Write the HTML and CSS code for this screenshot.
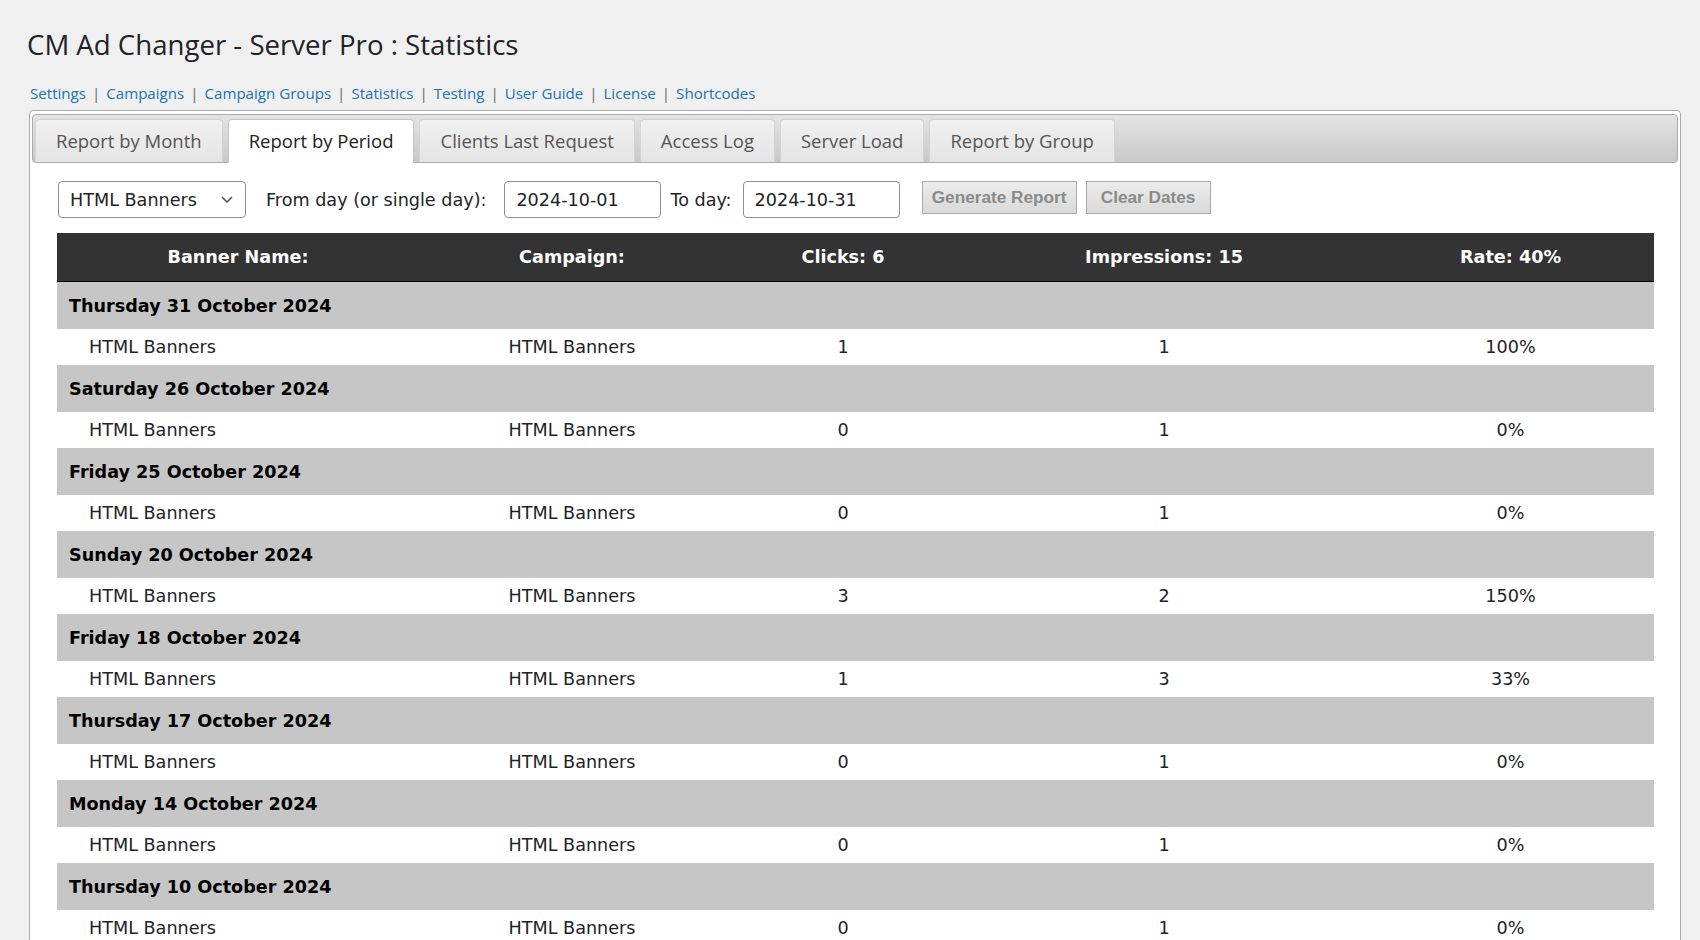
FILE: index.html
```html
<!DOCTYPE html>
<html>
<head>
<meta charset="utf-8">
<title>CM Ad Changer - Statistics</title>
<link rel="stylesheet" href="styles.css">
</head>
<body>
<div class="wrap">
  <h1 class="title">CM Ad Changer - Server Pro : Statistics</h1>
  <div class="subnav">
    <a href="#">Settings</a><span class="sep">|</span><a href="#">Campaigns</a><span class="sep">|</span><a href="#">Campaign Groups</a><span class="sep">|</span><a href="#">Statistics</a><span class="sep">|</span><a href="#">Testing</a><span class="sep">|</span><a href="#">User Guide</a><span class="sep">|</span><a href="#">License</a><span class="sep">|</span><a href="#">Shortcodes</a>
  </div>
  <div class="panel">
    <ul class="tabs">
      <li class="tab">Report by Month</li>
      <li class="tab active">Report by Period</li>
      <li class="tab">Clients Last Request</li>
      <li class="tab">Access Log</li>
      <li class="tab">Server Load</li>
      <li class="tab">Report by Group</li>
    </ul>
    <div class="content">
      <div class="controls">
        <div class="select"><span>HTML Banners</span><svg class="chev" width="12" height="7" viewBox="0 0 12 7"><path d="M1 1 L6 6 L11 1" fill="none" stroke="#50575e" stroke-width="1.6"/></svg></div>
        <span class="lbl from">From day (or single day):</span>
        <div class="input">2024-10-01</div>
        <span class="lbl to">To day:</span>
        <div class="input">2024-10-31</div>
        <button class="btn gen">Generate Report</button>
        <button class="btn clr">Clear Dates</button>
      </div>
      <table class="stats">
        <colgroup>
          <col class="c1"><col class="c2"><col class="c3"><col class="c4"><col class="c5">
        </colgroup>
        <thead>
          <tr><th>Banner Name:</th><th>Campaign:</th><th>Clicks: 6</th><th>Impressions: 15</th><th>Rate: 40%</th></tr>
        </thead>
        <tbody>
          <tr class="group"><td colspan="5">Thursday 31 October 2024</td></tr>
          <tr class="item"><td class="name">HTML Banners</td><td>HTML Banners</td><td>1</td><td>1</td><td>100%</td></tr>
          <tr class="group"><td colspan="5">Saturday 26 October 2024</td></tr>
          <tr class="item"><td class="name">HTML Banners</td><td>HTML Banners</td><td>0</td><td>1</td><td>0%</td></tr>
          <tr class="group"><td colspan="5">Friday 25 October 2024</td></tr>
          <tr class="item"><td class="name">HTML Banners</td><td>HTML Banners</td><td>0</td><td>1</td><td>0%</td></tr>
          <tr class="group"><td colspan="5">Sunday 20 October 2024</td></tr>
          <tr class="item"><td class="name">HTML Banners</td><td>HTML Banners</td><td>3</td><td>2</td><td>150%</td></tr>
          <tr class="group"><td colspan="5">Friday 18 October 2024</td></tr>
          <tr class="item"><td class="name">HTML Banners</td><td>HTML Banners</td><td>1</td><td>3</td><td>33%</td></tr>
          <tr class="group"><td colspan="5">Thursday 17 October 2024</td></tr>
          <tr class="item"><td class="name">HTML Banners</td><td>HTML Banners</td><td>0</td><td>1</td><td>0%</td></tr>
          <tr class="group"><td colspan="5">Monday 14 October 2024</td></tr>
          <tr class="item"><td class="name">HTML Banners</td><td>HTML Banners</td><td>0</td><td>1</td><td>0%</td></tr>
          <tr class="group"><td colspan="5">Thursday 10 October 2024</td></tr>
          <tr class="item"><td class="name">HTML Banners</td><td>HTML Banners</td><td>0</td><td>1</td><td>0%</td></tr>
        </tbody>
      </table>
    </div>
  </div>
</div>
</body>
</html>
```
FILE: styles.css
```css
html, body {
  margin: 0;
  padding: 0;
}
body {
  background: #f0f0f1;
  color: #1d2327;
  font-family: "Open Sans", "Noto Sans", sans-serif;
}
.wrap {
  padding: 0 19px 40px 27px;
}
.title {
  margin: 0;
  padding-top: 26px;
  font-size: 27.6px;
  line-height: 36px;
  font-weight: 400;
  color: #1d2327;
}
.subnav {
  margin: 20px 0 0 3px;
  font-size: 15.1px;
  line-height: 22px;
}
.subnav a {
  color: #2271b1;
  text-decoration: none;
}
.subnav .sep {
  color: #646970;
  margin: 0 6px;
}
.panel {
  margin: 6px 0 0 2px;
  border: 1px solid #aaaaaa;
  border-radius: 4px;
  background: #ffffff;
  padding: 3px 2px 20px;
}
.tabs {
  list-style: none;
  margin: 0;
  padding: 4px 2px 0 2px;
  display: flex;
  gap: 5px;
  height: 43px;
  border: 1px solid #aaaaaa;
  border-radius: 4px;
  background: linear-gradient(#e3e3e3, #c8c8c8);
}
.tab {
  height: 42px;
  line-height: 41px;
  padding: 0 20px;
  margin-bottom: -1px;
  border: 1px solid #d3d3d3;
  border-bottom: 0;
  border-radius: 4px 4px 0 0;
  background: linear-gradient(#f0f0f0, #e4e4e4);
  color: #555555;
  font-size: 18.5px;
  white-space: nowrap;
}
.tab.active {
  background: #ffffff;
  border-color: #c5c5c5;
  color: #212121;
  height: 43px;
}
.content {
  padding: 18px 24px 0 25px;
  font-family: "DejaVu Sans", Verdana, sans-serif;
  font-size: 17.6px;
  color: #1d2327;
}
.controls {
  display: flex;
  align-items: center;
  height: 37px;
}
.select {
  box-sizing: border-box;
  width: 188px;
  height: 37px;
  margin-left: 1px;
  padding: 0 12px 0 11px;
  border: 1px solid #8c8f94;
  border-radius: 4px;
  background: #fff;
  display: flex;
  align-items: center;
  justify-content: space-between;
}
.lbl {
  white-space: nowrap;
}
.lbl.from {
  margin: 0 18px 0 20px;
}
.lbl.to {
  margin: 0 11px 0 9px;
}
.input {
  box-sizing: border-box;
  width: 157px;
  height: 37px;
  padding: 0 11px;
  border: 1px solid #8c8f94;
  border-radius: 4px;
  background: #fff;
  display: flex;
  align-items: center;
}
.btn {
  box-sizing: border-box;
  height: 33px;
  margin: 0 0 4px 0;
  padding: 0 9px;
  border: 1px solid #a9a9a9;
  border-radius: 0;
  background: linear-gradient(#ececec, #d9d9d9);
  color: #8a8a8a;
  font-family: "Liberation Sans", Arial, sans-serif;
  font-weight: bold;
  font-size: 17.2px;
}
.btn.gen {
  margin-left: 22px;
  width: 155px;
}
.btn.clr {
  margin-left: 9px;
  width: 125px;
}
.stats {
  margin-top: 15px;
  width: 100%;
  border-collapse: collapse;
  border-spacing: 0;
  table-layout: fixed;
  font-size: 17.6px;
}
.c1 { width: 362px; }
.c2 { width: 306px; }
.c3 { width: 236px; }
.c4 { width: 406px; }
.stats th {
  background: #333333;
  color: #ffffff;
  height: 48px;
  padding: 0;
  font-weight: bold;
  text-align: center;
  border-bottom: 1px solid #000000;
}
.stats tr.group td {
  background: #c6c6c6;
  height: 47px;
  padding: 0 12px;
  font-weight: bold;
  color: #000000;
}
.stats tr.item td {
  background: #ffffff;
  height: 36px;
  padding: 0;
  text-align: center;
  color: #1d2327;
}
.stats tr.item td.name {
  text-align: left;
  padding-left: 32px;
}
```
